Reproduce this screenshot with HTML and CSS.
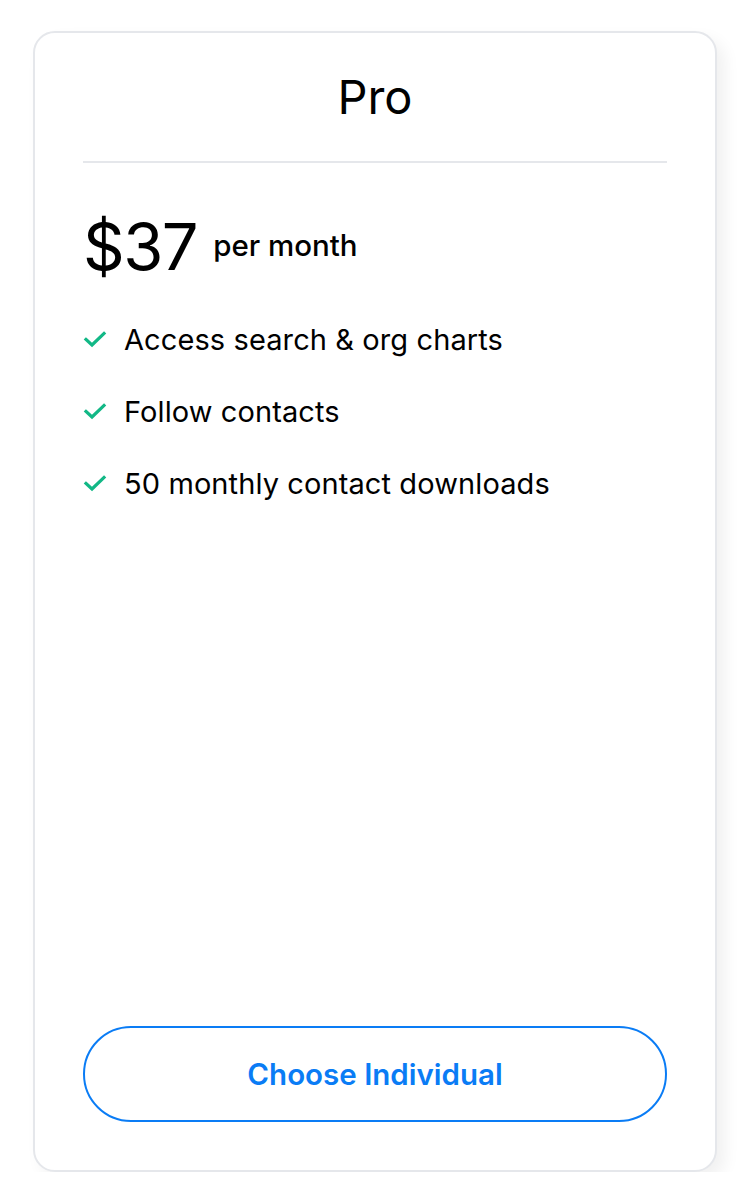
FILE: index.html
```html
<!DOCTYPE html>
<html lang="en">
<head>
<meta charset="UTF-8" />
<title>Pro plan</title>
<link rel="stylesheet" href="styles.css">
</head>
<body>
  <div class="plan">
    <h2 class="plan-name">Pro</h2>
    <div class="price">
      <span class="amount">$37</span>
      <span class="period">per month</span>
    </div>
    <ul class="features">
      <li>
        <svg class="check" viewBox="0 0 24 24" width="24" height="24"><path d="M3 12.5l6 5.5L21 6.5" fill="none" stroke="#12b886" stroke-width="3.2" stroke-linecap="square"/></svg>
        Access search &amp; org charts
      </li>
      <li>
        <svg class="check" viewBox="0 0 24 24" width="24" height="24"><path d="M3 12.5l6 5.5L21 6.5" fill="none" stroke="#12b886" stroke-width="3.2" stroke-linecap="square"/></svg>
        Follow contacts
      </li>
      <li>
        <svg class="check" viewBox="0 0 24 24" width="24" height="24"><path d="M3 12.5l6 5.5L21 6.5" fill="none" stroke="#12b886" stroke-width="3.2" stroke-linecap="square"/></svg>
        50 monthly contact downloads
      </li>
    </ul>
    <button class="choose">Choose Individual</button>
  </div>
</body>
</html>
```

FILE: styles.css
```css
body {
  margin: 0;
  background: #fff;
  font-family: Inter, "Noto Sans", sans-serif;
  color: #000;
}
.plan {
  box-sizing: border-box;
  margin: 31px 0 0 33px;
  width: 684px;
  height: 1141px;
  padding: 0 48px 48px;
  border: 2px solid #e5e7eb;
  border-radius: 22px;
  background: #fff;
  box-shadow: 8px 8px 16px rgba(0, 0, 0, 0.06);
  display: flex;
  flex-direction: column;
}
.plan-name {
  margin: 0;
  padding: 35px 0 35px;
  font-size: 47px;
  font-weight: 400;
  line-height: 58px;
  text-align: center;
  border-bottom: 2px solid #e5e7eb;
}
.price {
  display: flex;
  align-items: center;
  gap: 16px;
  margin-top: 44px;
}
.amount {
  font-size: 65px;
  font-weight: 400;
  line-height: 80px;
  letter-spacing: -1.5px;
}
.period {
  font-size: 29.5px;
  font-weight: 500;
  margin-top: -4px;
}
.features {
  list-style: none;
  margin: 16px 0 0;
  padding: 0;
}
.features li {
  display: flex;
  align-items: center;
  gap: 17px;
  height: 72px;
  font-size: 29px;
  letter-spacing: 0.1px;
}
.check {
  flex: none;
}
.choose {
  margin-top: auto;
  height: 96px;
  border: 2px solid #0a7cf5;
  border-radius: 48px;
  background: #fff;
  color: #0a7cf5;
  font-family: inherit;
  font-size: 29.5px;
  font-weight: 600;
  cursor: pointer;
}
```
